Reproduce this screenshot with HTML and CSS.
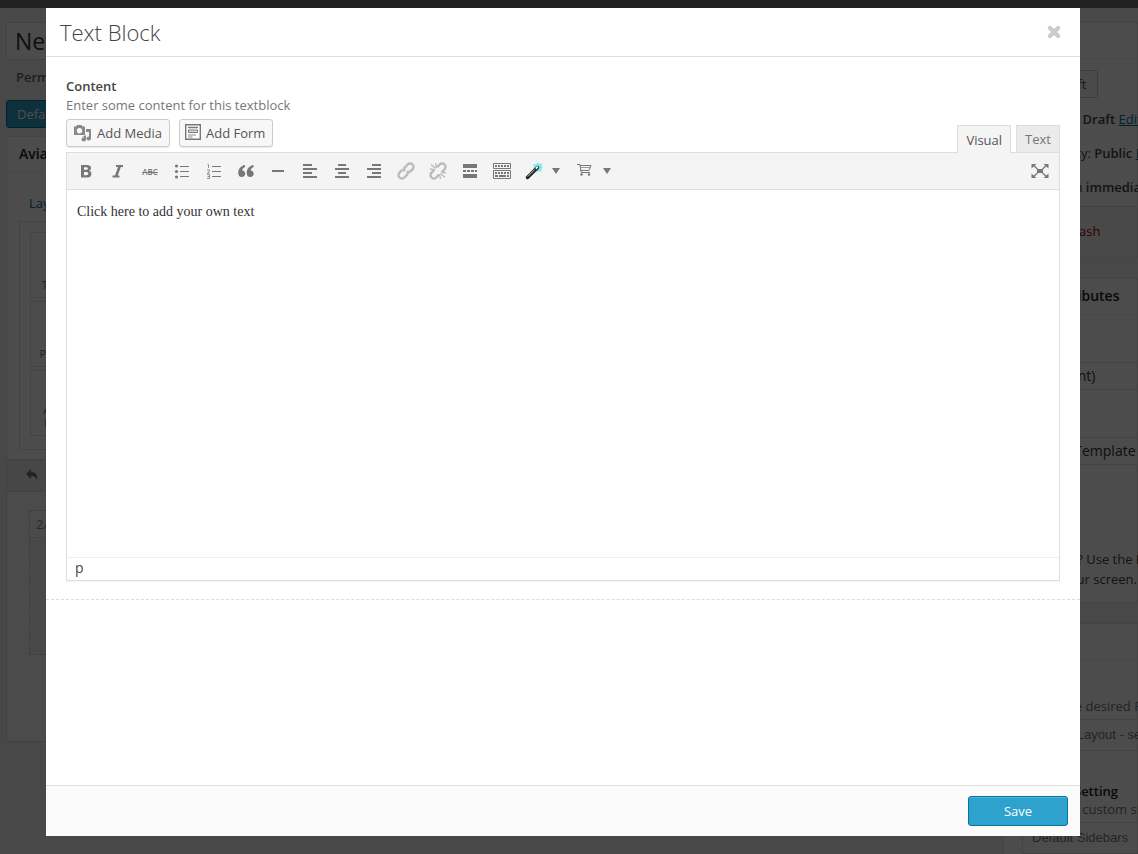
FILE: index.html
```
<!DOCTYPE html>
<html lang="en">
<head>
    <meta charset="UTF-8">
    <meta name="viewport" content="width=device-width, initial-scale=1.0">
    <title>Text Block</title>
    <link rel="stylesheet" href="styles.css">
</head>
<body>
    <div class="adminbar"></div>

    <!-- edit page, behind the modal -->
    <div class="page">
        <main class="main">
            <input class="title-input" type="text" aria-label="Title" value="New Page">
            <p class="permalink">Permalink:</p>
            <button type="button" class="btn-editor">Default Editor</button>
            <section class="builder">
                <h2 class="builder-title">Avia Layout Builder</h2>
                <div class="builder-body">
                    <a href="#" class="builder-tab">Layout Elements</a>
                    <div class="elements">
                        <div class="element">Text Block</div>
                        <div class="element">Promo Box</div>
                        <div class="element">Animated<br>Numbers</div>
                    </div>
                </div>
            </section>
            <section class="canvas">
                <div class="canvas-bar">
                    <button type="button" class="undo" aria-label="Undo">
                        <svg width="14" height="12" viewBox="0 0 14 12"><path d="M6 0v3c5 0 7 3 6 8-1-3-3-4-6-4v3L1 5z" fill="currentColor"/></svg>
                    </button>
                </div>
                <div class="column">
                    <div class="column-head">2/3</div>
                </div>
            </section>
        </main>
        <aside class="side">
            <section class="box publish">
                <h2 class="box-title"></h2>
                <div class="box-body">
                    <button type="button" class="btn-draft">Save Draft</button>
                    <p class="pub-row pub-status">Status: <b>Draft</b> <a href="#">Edit</a></p>
                    <p class="pub-row">Visibility: <b>Public</b> <a href="#">Edit</a></p>
                    <p class="pub-row">Publish <b>immediately</b></p>
                </div>
                <div class="pub-foot"><a href="#" class="trash">Move to Trash</a></div>
            </section>
            <section class="box attributes">
                <h2 class="box-title">Page Attributes</h2>
                <div class="box-body">
                    <div class="pick pick-parent">(no parent)</div>
                    <div class="pick pick-template">Default Template</div>
                    <p class="help">Need help? Use the Help tab<br>right of your screen.</p>
                </div>
            </section>
            <section class="box layout">
                <h2 class="box-title"></h2>
                <div class="box-body">
                    <p class="hint">Select the desired Page layout</p>
                    <div class="pick pick-layout">Default Layout - set in</div>
                    <p class="hint-title">Sidebar Setting</p>
                    <p class="hint hint-side">Choose a custom sidebar</p>
                    <div class="pick pick-layout pick-sidebar">Default Sidebars</div>
                </div>
            </section>
        </aside>
    </div>

    <div class="overlay"></div>

    <div class="modal" role="dialog" aria-labelledby="modal-title">
        <header class="modal-head">
            <h1 class="modal-title" id="modal-title">Text Block</h1>
            <button type="button" class="close" aria-label="Close">
                <svg width="14" height="14" viewBox="0 0 14 14"><path d="M3 3l8 8M11 3l-8 8" stroke="currentColor" stroke-width="4.4" stroke-linecap="round"/></svg>
            </button>
        </header>

        <div class="modal-body">
            <div class="field">
                <label class="field-label" for="content">Content</label>
                <p class="field-desc">Enter some content for this textblock</p>
                <div class="editor-top">
                    <button type="button" class="media-btn">
                        <svg width="18" height="18" viewBox="0 0 18 18" fill="#888"><path fill-rule="evenodd" d="M0 2.500h2L3 1h4.500l1 1.500h2.500V11H0zM5.500 4a2.700 2.700 0 1 0 0 5.400a2.700 2.700 0 1 0 0-5.400z"/><path d="M12 5h5v9.500a2.300 2 0 1 1-2-2V8h-3z"/><path d="M8 12.500h2v-1h2v4a2.300 2 0 1 1-2-2z"/></svg>
                        Add Media
                    </button>
                    <button type="button" class="media-btn media-form">
                        <svg width="16" height="16" viewBox="0 0 16 16"><path d="M.7.7h14.600v14.600H.7z" fill="#fff" stroke="#777" stroke-width="1.400"/><path d="M3 3.500h10" stroke="#777" stroke-width="1.500"/><path d="M3.500 6h9v2.500h-9z" fill="#ddd" stroke="#777"/><path d="M3 11h8M3 13h4.500" stroke="#888"/></svg>
                        Add Form
                    </button>
                    <div class="tabs">
                        <button type="button" class="tab active">Visual</button>
                        <button type="button" class="tab">Text</button>
                    </div>
                </div>

                <div class="editor">
                    <div class="toolbar">
                        <button type="button" class="tool" aria-label="Bold">
                            <svg viewBox="0 0 20 20"><path fill-rule="evenodd" fill="currentColor" d="M5 4h5.500c3 0 4.500 1 4.500 3.100 0 1.500-.8 2.400-2 2.700 1.500.3 2.400 1.300 2.400 2.900 0 2.700-1.700 3.900-4.700 3.900H5zM8 6.200v2.600h2c1.300 0 1.900-.4 1.900-1.300S11.300 6.200 10 6.200zM8 11v3.300h2.200c1.400 0 2.100-.6 2.100-1.700S11.600 11 10.200 11z"/></svg>
                        </button>
                        <button type="button" class="tool" aria-label="Italic">
                            <svg viewBox="0 0 20 20" fill="none" stroke="currentColor" stroke-width="2"><path d="M8 5h7M4.500 15.500h7"/><path d="M11.800 5L8 15.500" stroke-width="2.600"/></svg>
                        </button>
                        <button type="button" class="tool tool-strike" aria-label="Strikethrough"><s>ABC</s></button>
                        <button type="button" class="tool" aria-label="Bulleted list">
                            <svg viewBox="0 0 20 20"><g fill="currentColor"><circle cx="4.500" cy="5" r="1.600"/><circle cx="4.500" cy="10.500" r="1.600"/><circle cx="4.500" cy="16" r="1.600"/></g><path d="M8 5.500h9M8 10.500h9M8 15.500h9" stroke="currentColor"/></svg>
                        </button>
                        <button type="button" class="tool" aria-label="Numbered list">
                            <svg viewBox="0 0 20 20" fill="none" stroke="currentColor"><path d="M8 5.500h9M8 10.500h9M8 15.500h9"/><path d="M3.500 3.500h1V7M3 8.800h2.300v1.500L3.300 12h2.500M3 13.600h2.500v3.900H3M3.500 15.500h2" stroke-width=".8"/></svg>
                        </button>
                        <button type="button" class="tool" aria-label="Blockquote">
                            <svg viewBox="0 0 20 20" fill="currentColor"><path d="M9 4C5 4.500 2.200 8 2.200 11.800c0 2.800 1.300 4.200 3.500 4.200s3.500-1.400 3.500-3.300-1.200-3.200-3-3.200c0-1.500 1-2.800 2.800-3.500z"/><path d="M17.500 4c-4 .5-6.800 4-6.800 7.800 0 2.800 1.300 4.200 3.500 4.200s3.500-1.400 3.500-3.300-1.200-3.200-3-3.200c0-1.500 1-2.800 2.800-3.500z"/></svg>
                        </button>
                        <button type="button" class="tool" aria-label="Horizontal line">
                            <svg viewBox="0 0 20 20"><path d="M4 10h12" stroke="currentColor" stroke-width="2"/></svg>
                        </button>
                        <button type="button" class="tool" aria-label="Align left">
                            <svg viewBox="0 0 20 20" stroke="currentColor" stroke-width="2"><path d="M3 4h9M3 8h14M3 12h9M3 16h14"/></svg>
                        </button>
                        <button type="button" class="tool" aria-label="Align center">
                            <svg viewBox="0 0 20 20" stroke="currentColor" stroke-width="2"><path d="M6 4h8M3 8h14M6 12h8M3 16h14"/></svg>
                        </button>
                        <button type="button" class="tool" aria-label="Align right">
                            <svg viewBox="0 0 20 20" stroke="currentColor" stroke-width="2"><path d="M8 4h9M3 8h14M8 12h9M3 16h14"/></svg>
                        </button>
                        <button type="button" class="tool" aria-label="Insert link" disabled>
                            <svg viewBox="0 0 20 20" fill="none" stroke="currentColor" stroke-width="2.400"><g transform="rotate(-45 10 10)"><path d="M8.500 6.600H4.200a3.400 3.400 0 0 0 0 6.800h3.600c1.800 0 3-1 3.300-2.600M11.500 13.400h4.300a3.400 3.400 0 0 0 0-6.800h-3.600c-1.800 0-3 1-3.300 2.600"/></g></svg>
                        </button>
                        <button type="button" class="tool" aria-label="Remove link" disabled>
                            <svg viewBox="0 0 20 20" fill="none" stroke="currentColor" stroke-width="2.400"><g transform="rotate(-45 10 10)"><path d="M7.800 6.600H4.200a3.400 3.400 0 0 0 0 6.800h3.600M12.200 13.400h3.600a3.400 3.400 0 0 0 0-6.800h-3.600"/></g><path d="M7.500 2l1 5M3 3.500l4.500 4M2 8l5 1M12.500 18l-1-5M17 16.500l-4.500-4M18 12l-5-1" stroke-width="1.300"/></svg>
                        </button>
                        <button type="button" class="tool" aria-label="Read more">
                            <svg viewBox="0 0 20 20"><path d="M3 3h14v4H3zM3 13h14v4H3z" fill="currentColor"/><path d="M3 10h14" stroke="currentColor" stroke-width="2" stroke-dasharray="3 1"/></svg>
                        </button>
                        <button type="button" class="tool" aria-label="Toggle toolbar">
                            <svg viewBox="0 0 20 20" fill="none" stroke="currentColor"><path d="M1.500 2.500h17v5h-17zM1.500 9.500h17v8h-17z"/><path d="M3 5h14M3 12h14" stroke-width="2" stroke-dasharray="2 1"/><path d="M3 15h3M7 15h7M15 15h2" stroke-width="2"/></svg>
                        </button>
                        <button type="button" class="tool tool-menu" aria-label="Insert shortcode">
                            <svg viewBox="0 0 20 20"><path d="M9 3l3 .5L14 1.500l1.500 1.500 2.500-1-.5 3 1.500 2-2 1 .5 3-2.500-1-2 1.500-1.500-2.500L9 8l1-2z" fill="#7fe8f2"/><path d="M3.500 16.500L13.500 6.500" stroke="#222" stroke-width="3.400" stroke-linecap="round"/><path d="M3.800 15.500l7-7" stroke="#bbb" stroke-width="1"/><path d="M11.800 7.700l2-2" stroke="#fff" stroke-width="1.800"/></svg>
                            <span class="caret"></span>
                        </button>
                        <button type="button" class="tool tool-menu" aria-label="Insert product">
                            <svg viewBox="0 0 20 20" fill="none" stroke="currentColor"><path d="M2 3.500h3l1 7.500M5 4.500h11l-2 5H6M6 11.500h9"/><path d="M6 6.500h9" stroke-width=".7"/><circle cx="6.500" cy="13.500" r="1.200" fill="currentColor" stroke="none"/><circle cx="14" cy="13.500" r="1.200" fill="currentColor" stroke="none"/></svg>
                            <span class="caret"></span>
                        </button>
                        <button type="button" class="tool tool-full" aria-label="Fullscreen">
                            <svg viewBox="0 0 20 20"><path d="M7 8h6v4H7z" fill="currentColor"/><path d="M3 4l4.500 4M17 4l-4.500 4M3 16l4.500-4M17 16l-4.500-4" stroke="currentColor" stroke-width="1.300"/><path d="M1.500 3h5l-5 4.500zM18.500 3h-5l5 4.500zM1.500 17h5l-5-4.500zM18.500 17h-5l5-4.500z" fill="currentColor"/></svg>
                        </button>
                    </div>
                    <textarea class="editor-area" id="content">Click here to add your own text</textarea>
                    <div class="statusbar">p</div>
                </div>
            </div>
        </div>

        <footer class="modal-foot">
            <button type="button" class="save">Save</button>
        </footer>
    </div>
</body>
</html>
```
FILE: styles.css
```
* {
    box-sizing: border-box;
}

body {
    margin: 0;
    height: 100vh;
    overflow: hidden;
    background: #f1f1f1;
    color: #444;
    font-family: "Open Sans", sans-serif;
    font-size: 13px;
    line-height: 20px;
}

h1, h2, p {
    margin: 0;
}

button, input, textarea {
    font-family: inherit;
    font-size: 13px;
}

a {
    color: #0074a2;
}

.adminbar {
    height: 8px;
    background: #222;
}

/* edit page */
.page {
    display: flex;
    gap: 20px;
    padding: 14px 0 0 6px;
    white-space: nowrap;
}

.main {
    flex: 1;
    min-width: 0;
}

.title-input {
    display: block;
    width: 100%;
    height: 38px;
    padding: 0 8px;
    border: 1px solid #ddd;
    background: #fff;
    color: #333;
    font-size: 23px;
}

.permalink {
    margin: 7px 10px 13px;
    font-weight: 600;
    color: #666;
}

.btn-editor {
    height: 28px;
    padding: 0 10px;
    border: 1px solid #0074a2;
    border-radius: 3px;
    background: #2ea2cc;
    color: #fff;
}

.builder {
    margin-top: 8px;
    border: 1px solid #e5e5e5;
    background: #fff;
}

.builder-title {
    padding: 0 12px;
    border-bottom: 1px solid #eee;
    color: #222;
    font-size: 14px;
    font-weight: 600;
    line-height: 34px;
}

.builder-body {
    padding: 21px 12px 9px;
}

.builder-tab {
    display: block;
    padding: 0 10px 8px;
    line-height: 20px;
    text-decoration: none;
}

.elements {
    padding: 10px;
    border: 1px solid #e1e1e1;
}

.element {
    display: flex;
    align-items: flex-end;
    justify-content: center;
    width: 76px;
    height: 66px;
    margin-bottom: 3px;
    padding-bottom: 6px;
    border: 1px solid #e1e1e1;
    color: #777;
    font-size: 11px;
    line-height: 13px;
    text-align: center;
}

.canvas {
    height: 282px;
    border: 1px solid #ddd;
    background: #fafafa;
}

.canvas-bar {
    height: 31px;
    padding: 5px 12px;
    border-bottom: 1px solid #ddd;
    background: #eee;
}

.undo {
    border: 0;
    background: none;
    color: #777;
}

.column {
    width: 400px;
    height: 145px;
    margin: 18px 22px;
    border: 1px dashed #ccc;
    background: #f4f4f4;
}

.column-head {
    padding: 0 6px;
    border-bottom: 1px solid #e1e1e1;
    background: #fafafa;
    color: #888;
    line-height: 26px;
}

.side {
    flex: 0 0 135px;
    overflow: hidden;
}

.box {
    margin-bottom: 20px;
    border: 1px solid #e5e5e5;
    background: #fff;
}

.box-title {
    height: 36px;
    padding: 0 11px;
    border-bottom: 1px solid #eee;
    color: #222;
    font-size: 14px;
    font-weight: 600;
    line-height: 34px;
}

.box-body {
    padding: 11px 9px 0;
}

.btn-draft {
    height: 28px;
    padding: 0 10px;
    border: 1px solid #ccc;
    border-radius: 3px;
    background: #f7f7f7;
    color: #555;
}

.pub-row {
    padding: 4px 0 10px 25px;
}

.pub-status {
    padding-top: 11px;
}

.pub-row b {
    font-weight: 600;
}

.pub-foot {
    margin-top: -1px;
    padding: 14px 10px 16px;
    border-top: 1px solid #ddd;
    background: #f5f5f5;
}

.trash {
    color: #a00;
    text-decoration: none;
}

.attributes .box-body {
    padding: 47px 9px 13px;
}

.pick {
    margin-right: -20px;
    padding: 0 9px;
    border: 1px solid #ddd;
    color: #333;
    font-size: 14px;
    line-height: 26px;
}

.pick-template {
    margin-top: 47px;
}

.help {
    margin: 84px 0 0 2px;
}

.layout .box-body {
    padding-top: 36px;
}

.hint {
    margin-left: 10px;
    color: #777;
}

.hint-title {
    margin: 31px 0 0 10px;
    font-weight: 600;
    color: #222;
    line-height: 18px;
}

.hint-side {
    line-height: 18px;
}

.pick-layout {
    margin: 3px -20px 0 9px;
    color: #777;
    font-family: "Liberation Sans", Arial, sans-serif;
    font-size: 13px;
    line-height: 30px;
}

.pick-sidebar {
    margin-top: 4px;
}

.overlay {
    position: fixed;
    inset: 8px 0 0;
    background: rgba(0, 0, 0, 0.7);
}

/* modal */
.modal {
    position: fixed;
    inset: 8px 58px 18px 46px;
    display: flex;
    flex-direction: column;
    background: #fff;
}

.modal-head {
    display: flex;
    align-items: center;
    justify-content: space-between;
    padding: 0 18px 0 14px;
    border-bottom: 1px solid #ddd;
    line-height: 48px;
}

.modal-title {
    font-size: 22px;
    font-weight: 300;
}

.close {
    display: flex;
    padding: 1px;
    border: 0;
    background: none;
    color: #ccc;
}

.modal-body {
    flex: 1;
    min-height: 0;
    overflow: hidden;
}

.field {
    padding: 20px 20px 18px;
    border-bottom: 1px dashed #ddd;
}

.field-label {
    display: block;
    font-weight: 600;
    line-height: 19px;
}

.field-desc {
    color: #777;
    line-height: 19px;
}

.editor-top {
    display: flex;
    align-items: flex-start;
    gap: 9px;
    margin-top: 4px;
}

.media-btn {
    display: flex;
    align-items: center;
    gap: 5px;
    height: 28px;
    padding: 0 7px;
    border: 1px solid #ccc;
    border-radius: 3px;
    background: #f7f7f7;
    box-shadow: 0 1px 0 rgba(0, 0, 0, 0.08);
    color: #555;
}

.media-form {
    padding-left: 5px;
}

.media-form svg {
    margin-bottom: 3px;
}

.tabs {
    display: flex;
    gap: 5px;
    margin: 6px 0 0 auto;
}

.tab {
    height: 27px;
    padding: 0 8px;
    border: 1px solid #dedede;
    border-bottom: 0;
    background: #ebebeb;
    color: #777;
}

.tab.active {
    position: relative;
    height: 28px;
    margin-bottom: -1px;
    background: #f4f4f4;
    color: #555;
}

.editor {
    border: 1px solid #dedede;
    box-shadow: 0 1px 1px rgba(0, 0, 0, 0.04);
}

.toolbar {
    display: flex;
    gap: 4px;
    padding: 4px 5px;
    border-bottom: 1px solid #dedede;
    background: #f4f4f4;
}

.tool {
    display: flex;
    align-items: center;
    justify-content: center;
    width: 28px;
    height: 28px;
    padding: 0;
    border: 0;
    background: none;
    color: #777;
}

.tool svg {
    width: 20px;
    height: 20px;
}

.tool:disabled {
    color: #bbb;
}

.tool-strike {
    font-size: 8px;
    font-weight: 600;
}

.tool-menu {
    justify-content: flex-start;
    gap: 8px;
    width: 47px;
    padding-left: 4px;
}

.caret {
    border: 4px solid transparent;
    border-top: 6px solid #777;
    border-bottom: 0;
}

.tool-full {
    margin-left: auto;
}

.editor-area {
    display: block;
    width: 100%;
    height: 367px;
    padding: 12px 10px;
    border: 0;
    outline: 0;
    resize: none;
    background: #fff;
    color: #333;
    font-family: "Liberation Serif", "Times New Roman", serif;
    font-size: 14px;
    line-height: 20px;
}

.statusbar {
    padding: 0 8px 2px;
    border-top: 1px solid #eee;
    font-size: 14px;
    line-height: 20px;
}

.modal-foot {
    display: flex;
    justify-content: flex-end;
    padding: 10px 12px;
    border-top: 1px solid #ddd;
    background: #fbfbfb;
}

.save {
    width: 100px;
    height: 30px;
    border: 1px solid #0074a2;
    border-radius: 3px;
    background: #2ea2cc;
    box-shadow: inset 0 1px 0 rgba(120, 200, 230, 0.5);
    color: #fff;
}
```
